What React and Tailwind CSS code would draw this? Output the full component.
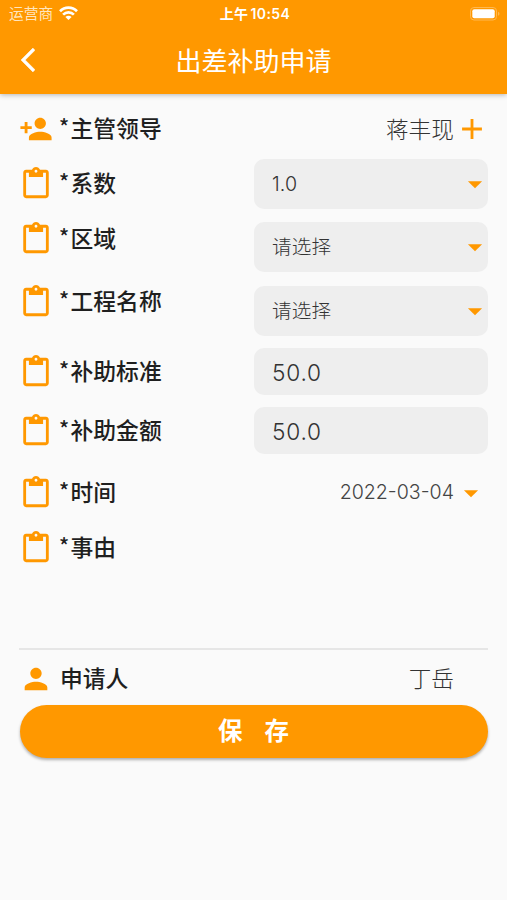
import { useState } from "react";
import { MdAdd, MdArrowDropDown, MdContentPaste, MdPerson, MdPersonAdd } from "react-icons/md";

function StatusBar() {
    return (
        <div className="grid grid-cols-3 items-center h-[27px] pl-[9px] pr-[6px] text-[14px]">
            <div className="flex items-center gap-1.5">
                <span className="pt-[2px] text-[#ffe6bf] text-[14.7px]">运营商</span>
                <svg width="19" height="14" viewBox="0 0 19 14" fill="none" stroke="white" strokeWidth="2.7" className="-mt-px">
                    <path d="M1 5.2C5.8 0.4 13.2 0.4 18 5.2" />
                    <path d="M4.1 8.6C7.2 5.6 11.8 5.6 14.9 8.6" />
                    <path d="M6.4 10.9C8.1 9.3 10.9 9.3 12.6 10.9L9.5 14Z" fill="white" stroke="none" />
                </svg>
            </div>
            <div className="text-center font-semibold tracking-[0.4px] whitespace-nowrap">
                上午<span className="pl-[2px]">10:54</span>
            </div>
            <div className="flex items-center justify-end">
                <svg width="31" height="14" viewBox="0 0 31 14">
                    <rect x="0.5" y="0.5" width="26" height="12.5" rx="3.5" fill="none" stroke="#ffb850" />
                    <rect x="2.3" y="2.3" width="22.4" height="8.9" rx="2" fill="white" />
                    <path d="M28 4.7C30 5.4 30 8.1 28 8.8Z" fill="#ffb850" />
                </svg>
            </div>
        </div>
    );
}

function Label({ icon: Icon = MdContentPaste, required = true, children, className = "" }) {
    return (
        <div className={`flex items-center gap-[6px] w-[235px] shrink-0 ${className}`}>
            <Icon size={34} className="text-[#ff9800]" />
            <span className="text-[22.8px] leading-[34px] font-medium text-[#1f1f1f]">
                {required && (
                    <span className="inline-block w-[11.5px] text-[21px] leading-none font-['Noto_Sans_CJK_SC'] align-[2px]">*</span>
                )}
                {children}
            </span>
        </div>
    );
}

function Select({ value }) {
    return (
        <button
            type="button"
            className="flex items-center justify-between flex-1 h-[50px] pl-[18px] rounded-[10px] bg-[#eeeeee] text-[19.6px] font-light text-[#333333]"
        >
            <span className="pt-[2px] tracking-[0.1px]">{value}</span>
            <MdArrowDropDown size={34} className="text-[#ff9800] -mr-[4px]" />
        </button>
    );
}

function Input({ value, onChange }) {
    return (
        <input
            value={value}
            onChange={(e) => onChange(e.target.value)}
            className="flex-1 min-w-0 h-[47px] pt-px pl-[18px] rounded-[10px] bg-[#eeeeee] text-[22.7px] tracking-[0.8px] font-light text-[#333333] outline-none"
        />
    );
}

function App() {
    const [standard, setStandard] = useState("50.0");
    const [amount, setAmount] = useState("50.0");

    return (
        <div className="min-h-screen bg-[#fafafa] font-['Inter','Noto_Sans_CJK_SC',sans-serif]">
            <header className="h-[94px] bg-[#ff9800] text-white shadow-[0_1px_5px_rgba(0,0,0,0.28)]">
                <StatusBar />
                <div className="grid grid-cols-[60px_1fr_60px] items-center h-[66px]">
                    <svg width="14" height="24" viewBox="0 0 11.67 20" className="ml-[21px]" fill="white">
                        <path d="M11.67 1.87L9.9 0.1 0 10l9.9 9.9 1.77-1.77L3.54 10z" stroke="white" strokeWidth="0.4" />
                    </svg>
                    <h1 className="pt-[2px] text-center text-[26px] font-normal">出差补助申请</h1>
                </div>
            </header>

            <form className="flex flex-col pl-[19px] pr-[19px] pt-[10px]" onSubmit={(e) => e.preventDefault()}>
                <div className="flex items-center h-[50px]">
                    <Label icon={MdPersonAdd}>主管领导</Label>
                    <div className="flex items-center justify-end flex-1 -mr-px text-[22.7px] font-light text-[#333333]">
                        <span className="pt-[2px] pr-px">蒋丰现</span>
                        <MdAdd size={34} className="text-[#ff9800]" />
                    </div>
                </div>

                <div className="flex items-center h-[50px] mt-[5px]">
                    <Label>系数</Label>
                    <Select value="1.0" />
                </div>
                <div className="flex items-center h-[50px] mt-[13px]">
                    <Label className="pb-[17px]">区域</Label>
                    <Select value="请选择" />
                </div>
                <div className="flex items-center h-[50px] mt-[14px]">
                    <Label className="pb-[18px]">工程名称</Label>
                    <Select value="请选择" />
                </div>

                <div className="flex items-center h-[47px] mt-3">
                    <Label>补助标准</Label>
                    <Input value={standard} onChange={setStandard} />
                </div>
                <div className="flex items-center h-[47px] mt-3">
                    <Label>补助金额</Label>
                    <Input value={amount} onChange={setAmount} />
                </div>

                <div className="flex items-center h-[50px] mt-[14px]">
                    <Label>时间</Label>
                    <div className="flex items-center justify-end flex-1 text-[19.6px] font-light text-[#444444]">
                        <span>2022-03-04</span>
                        <MdArrowDropDown size={34} className="text-[#ff9800]" />
                    </div>
                </div>

                <div className="h-[119px] mt-[13px] border-b-2 border-[#e6e6e6]">
                    <Label>事由</Label>
                </div>

                <div className="flex items-center h-[54px] pt-[2px] mt-px">
                    <Label icon={MdPerson} required={false}>
                        <span className="pl-px">申请人</span>
                    </Label>
                    <div className="flex-1 pt-px pr-[34px] text-right text-[22.7px] font-light text-[#333333]">丁岳</div>
                </div>

                <button
                    type="submit"
                    className="h-[53px] ml-px rounded-full bg-[#ff9800] text-white text-[24.5px] font-bold shadow-[0_2px_3px_rgba(0,0,0,0.3)]"
                >
                    <span className="inline-flex gap-[22px] pr-px">
                        <span>保</span>
                        <span>存</span>
                    </span>
                </button>
            </form>
        </div>
    );
}

export default App;
